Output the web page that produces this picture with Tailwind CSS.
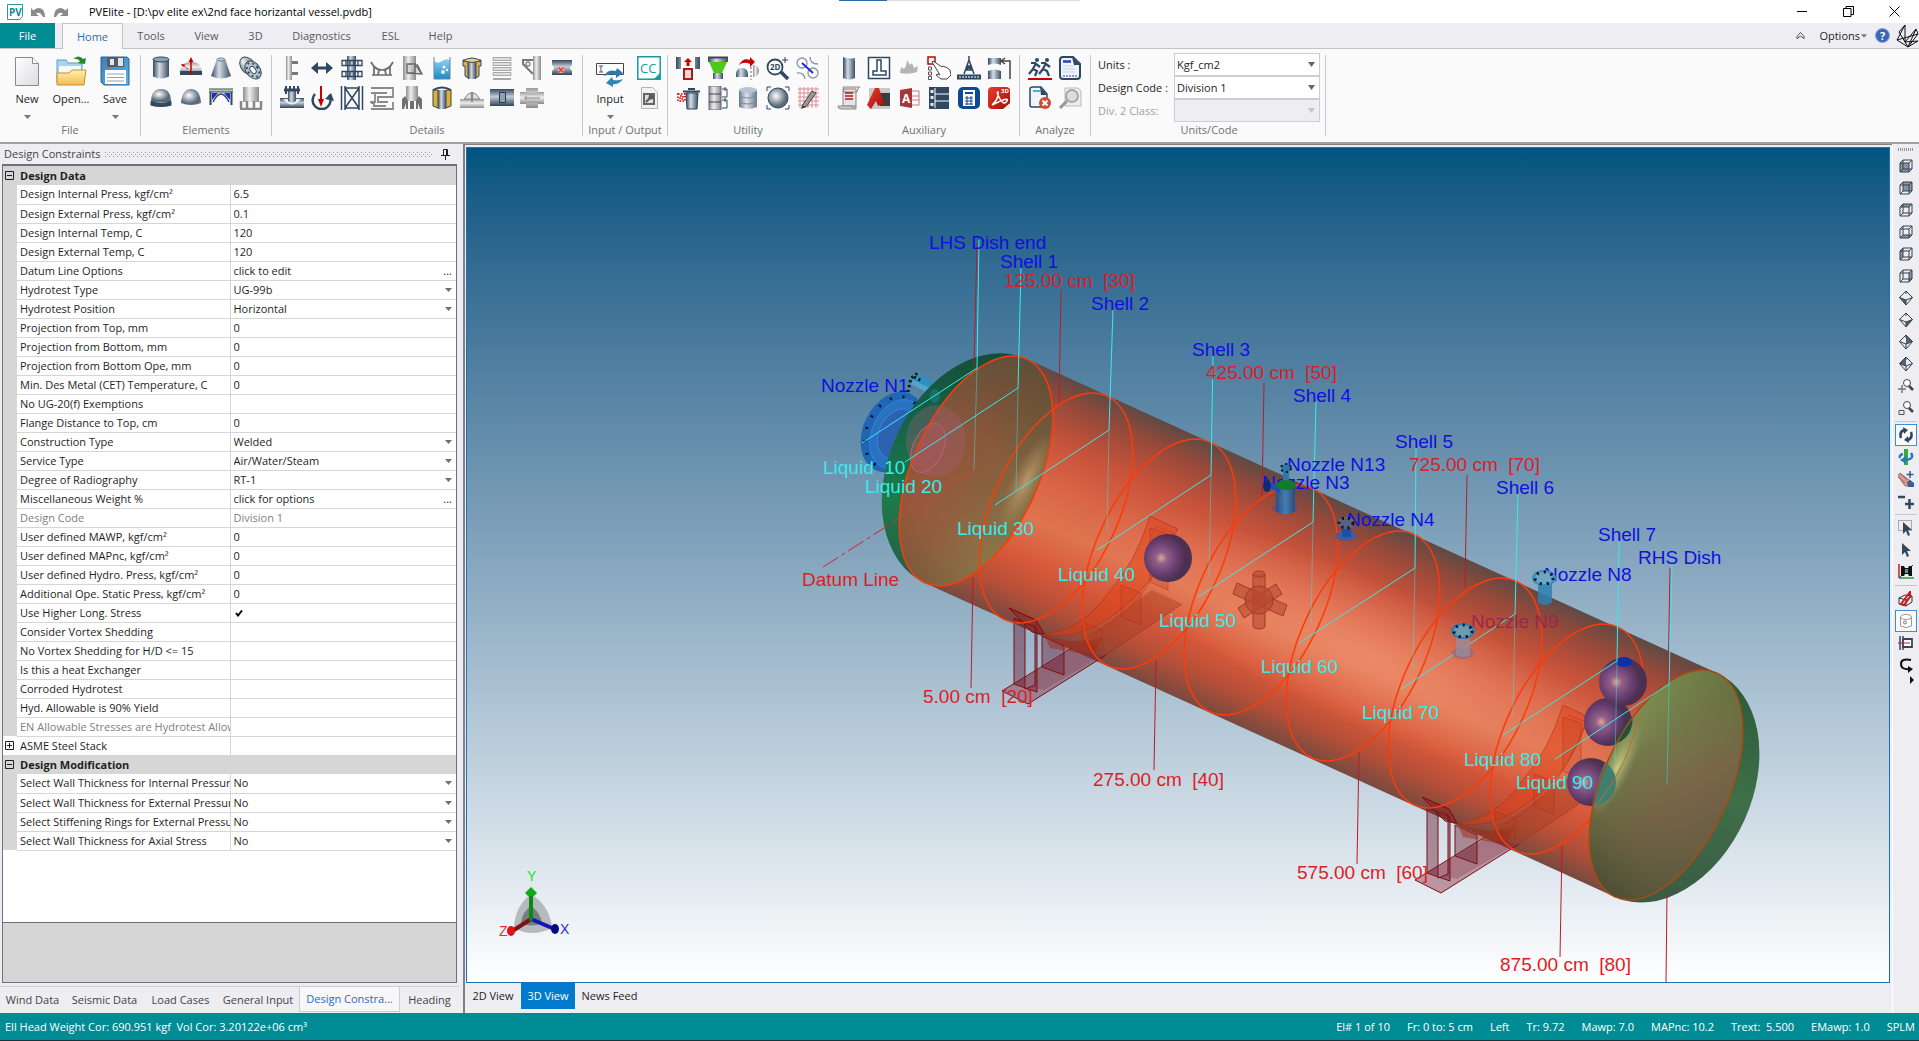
<!DOCTYPE html>
<html lang="en">
<head>
  <meta charset="UTF-8" />
  <title>PVElite</title>
  <script src="https://cdn.jsdelivr.net/npm/@tailwindcss/browser@4"></script>
</head>
<body class="h-screen flex flex-col overflow-hidden bg-[#eeeef2] font-['Open_Sans',sans-serif] text-[11px] leading-4 text-[#1e1e1e]">

  <!-- shared gradients -->
  <svg class="absolute size-0" aria-hidden="true">
    <defs>
      <linearGradient id="steel"><stop offset="0" stop-color="#34485c" /><stop offset=".4" stop-color="#d5dde5" /><stop offset="1" stop-color="#3a4e62" /></linearGradient>
      <linearGradient id="steelV" x2="0" y2="1"><stop offset="0" stop-color="#34485c" /><stop offset=".45" stop-color="#c3cdd6" /><stop offset="1" stop-color="#2f4358" /></linearGradient>
      <linearGradient id="gray"><stop offset="0" stop-color="#8f8f8f" /><stop offset=".4" stop-color="#eeeeee" /><stop offset="1" stop-color="#8a8a8a" /></linearGradient>
      <linearGradient id="grayV" x2="0" y2="1"><stop offset="0" stop-color="#999" /><stop offset=".45" stop-color="#eee" /><stop offset="1" stop-color="#8a8a8a" /></linearGradient>
      <radialGradient id="ball" cx=".4" cy=".4"><stop offset="0" stop-color="#fff" /><stop offset="1" stop-color="#5a6b7c" /></radialGradient>
      <linearGradient id="folder" x2="0" y2="1"><stop offset="0" stop-color="#fff0b0" /><stop offset="1" stop-color="#f0bd50" /></linearGradient>
      <linearGradient id="disk" x2="1" y2="1"><stop offset="0" stop-color="#3d7fb8" /><stop offset="1" stop-color="#55b4f5" /></linearGradient>
      <linearGradient id="page" x2="1" y2="1"><stop offset="0" stop-color="#ffffff" /><stop offset="1" stop-color="#dcdce2" /></linearGradient>
      <linearGradient id="water" x2="0" y2="1"><stop offset="0" stop-color="#8fd2f2" /><stop offset="1" stop-color="#1d88c4" /></linearGradient>
      <linearGradient id="red" x2="1" y2="1"><stop offset="0" stop-color="#e8402c" /><stop offset="1" stop-color="#a30d08" /></linearGradient>
    </defs>
  </svg>

  <!-- title bar -->
  <header class="relative flex h-[23px] shrink-0 items-center bg-white pl-[7px]">
    <div class="absolute top-0 left-[839px] flex h-px w-[241px] bg-[#dcdcdc]"><span class="h-px w-12 bg-[#2a6aa5]"></span></div>
    <svg class="size-4" viewBox="0 0 16 16"><path d="M.5.5h15v12l-3 3H.5z" fill="#fff" stroke="#2a9aa0" /><text x="2" y="12" font-size="10" font-weight="700" fill="#17878e" font-family="Open Sans">PV</text></svg>
    <button class="ml-[7px] text-[#8a8a8a]" aria-label="Undo"><svg class="h-4 w-4" viewBox="0 0 16 16"><path d="M1 4v8h8L6 9.500Q10 7 13 13h2Q15 4 8 4Q5 4.500 3.500 6.500z" fill="currentColor" /></svg></button>
    <button class="ml-[7px] text-[#8a8a8a]" aria-label="Redo"><svg class="h-4 w-4" viewBox="0 0 16 16"><path d="M15 4v8H7l3-2.500Q6 7 3 13H1Q1 4 8 4Q11 4.500 12.500 6.500z" fill="currentColor" /></svg></button>
    <h1 class="ml-5 text-[11px] text-black">PVElite - [D:\pv elite ex\2nd face horizantal vessel.pvdb]</h1>
    <div class="ml-auto flex items-center gap-[35px] pr-[19px]">
      <button aria-label="Minimize"><svg class="size-[11px]" viewBox="0 0 11 11"><path d="M0 5.500h10" stroke="#000" /></svg></button>
      <button aria-label="Restore"><svg class="size-[11px]" viewBox="0 0 11 11" fill="none" stroke="#000"><path d="M.5 2.500h7.500v8H.5zM3 2.500v-2h7.500v8H8" /></svg></button>
      <button aria-label="Close"><svg class="size-[11px]" viewBox="0 0 11 11"><path d="M.5.5l10 10M10.500.5l-10 10" stroke="#000" /></svg></button>
    </div>
  </header>

  <!-- ribbon tabs -->
  <nav class="flex h-[26px] shrink-0 items-stretch border-b border-[#c4c4c8] bg-[#eeeef2] text-[#5a5a5e]">
    <a href="#" class="flex w-[55px] items-center justify-center bg-[#008c95] text-white">File</a>
    <a href="#" class="-mb-px ml-[7px] flex w-[61px] items-center justify-center border border-b-0 border-[#c4c4c8] bg-[#fafafa] text-[#1c70b8]">Home</a>
    <a href="#" class="flex w-14 items-center justify-center">Tools</a>
    <a href="#" class="flex w-[55px] items-center justify-center">View</a>
    <a href="#" class="flex w-[43px] items-center justify-center">3D</a>
    <a href="#" class="flex w-[89px] items-center justify-center">Diagnostics</a>
    <a href="#" class="flex w-[49px] items-center justify-center">ESL</a>
    <a href="#" class="flex w-[51px] items-center justify-center">Help</a>
    <div class="ml-auto flex items-center text-[#1e1e1e]">
      <button aria-label="Collapse ribbon"><svg class="size-[9px]" viewBox="0 0 9 9"><path d="M1 5.500L4.500 1.500L8 5.500V7.500L4.500 5L1 7.500z" fill="#fff" stroke="#333" stroke-width=".9" /></svg></button>
      <button class="ml-3.5 flex items-center gap-px">Options<svg class="h-1 w-[6px]" viewBox="0 0 7 4"><path d="M0 0h7L3.500 4z" fill="#777" /></svg></button>
      <button class="ml-2" aria-label="Help"><svg class="size-[15px]" viewBox="0 0 15 15"><circle cx="7.500" cy="7.500" r="7" fill="#3a66b8" stroke="#8aa5d8" /><text x="5" y="12" font-size="11" font-weight="700" fill="#fff" font-family="Open Sans">?</text></svg></button>
      <svg class="ml-1.5 h-6 w-[23px]" viewBox="0 0 23 24" fill="none" stroke="#111"><path d="M9 1L1 16L12 23L22 10L20 5L9 18L9 1L3 8L12 23L20 5M1 16L22 10M9 18L22 17L12 23" /></svg>
    </div>
  </nav>

  <!-- ribbon -->
  <section class="flex h-[95px] shrink-0 items-stretch border-b-2 border-[#a0a0a0] bg-[#fafafa] pt-1.5 pb-1.5">
    <div class="flex w-[141px] flex-col border-r border-[#c8c8cc]">
      <div class="flex flex-1 justify-center gap-2 pl-0.5">
        <button class="flex w-9 flex-col items-center"><svg class="h-8 w-7" viewBox="0 0 28 32"><path d="M2.500 2.500h17l6 6v22h-23z" fill="url(#page)" stroke="#8a8a8a" /><path d="M19.500 2.500v6h6" fill="#fff" stroke="#8a8a8a" /></svg><span class="mt-1">New</span><svg class="mt-2 h-1 w-[7px]" viewBox="0 0 7 4"><path d="M0 0h7L3.500 4z" fill="#777" /></svg></button>
        <button class="flex w-9 flex-col items-center"><svg class="h-8 w-8" viewBox="0 0 32 32"><path d="M2 5h9l2 3h14v20H2z" fill="#a8d4ee" stroke="#5f9cc4" /><path d="M4 11h22v10H4z" fill="#f4f8fb" /><path d="M2 18h12l3-3h14l-2 15H2z" fill="url(#folder)" stroke="#c98f2c" /><path d="M18 4q6-5 10 0l3-1-1 6-7-1 2-2q-3-3-7-2z" fill="#1e8a2a" /></svg><span class="mt-1">Open...</span></button>
        <button class="flex w-9 flex-col items-center"><svg class="h-8 w-8" viewBox="0 0 32 32"><path d="M3 2h25l2 2v26H5l-3-3V2z" fill="url(#disk)" stroke="#2c6496" /><path d="M8 2h17v10H8z" fill="#555b62" /><path d="M11 4h4v6h-4zM19 3h5v8h-5z" fill="#e2e4e6" /><path d="M6 15h21v14H6z" fill="#fff" /><path d="M8 19h17M8 22.500h17M8 26h17" stroke="#9a9fa4" /></svg><span class="mt-1">Save</span><svg class="mt-2 h-1 w-[7px]" viewBox="0 0 7 4"><path d="M0 0h7L3.500 4z" fill="#777" /></svg></button>
      </div>
      <div class="text-center leading-3 text-[#707074]">File</div>
    </div>

    <div class="flex flex-col border-r border-[#c8c8cc] px-[5px]"><div id="elements" class="flex flex-1 flex-col gap-1"></div><div class="text-center leading-3 text-[#707074]">Elements</div></div>
    <div class="flex flex-col border-r border-[#c8c8cc] px-[5px]"><div id="details" class="flex flex-1 flex-col gap-1"></div><div class="text-center leading-3 text-[#707074]">Details</div></div>

    <div class="flex w-[85px] flex-col border-r border-[#c8c8cc]">
      <div class="flex flex-1 justify-center gap-1 pl-1">
        <button class="flex w-10 flex-col items-center"><svg class="h-8 w-8" viewBox="0 0 32 32"><path d="M2.500 8.500h27v11h-27z" fill="#fff" stroke="#444" /><path d="M5 11h4M5 17h4M7 11v6" stroke="#555" /><path d="M10 21q4-7 12-5l1-3 6 5-7 5 0-3q-5-2-12 1z" fill="#2a7bab" /><path d="M29 24q-4 6-10 5v3l-7-4 6-6 1 3q5 1 10-1z" fill="#2f86b8" /></svg><span class="mt-1">Input</span><svg class="mt-2 h-1 w-[7px]" viewBox="0 0 7 4"><path d="M0 0h7L3.500 4z" fill="#777" /></svg></button>
        <div id="io" class="flex flex-col gap-1"></div>
      </div>
      <div class="text-center leading-3 text-[#707074]">Input / Output</div>
    </div>

    <div class="flex flex-col border-r border-[#c8c8cc] px-[5px]"><div id="utility" class="flex flex-1 flex-col gap-1"></div><div class="text-center leading-3 text-[#707074]">Utility</div></div>
    <div class="flex flex-col border-r border-[#c8c8cc] px-[5px]"><div id="auxiliary" class="flex flex-1 flex-col gap-1"></div><div class="text-center leading-3 text-[#707074]">Auxiliary</div></div>
    <div class="flex flex-col border-r border-[#c8c8cc] px-[5px]"><div id="analyze" class="flex flex-1 flex-col gap-1"></div><div class="text-center leading-3 text-[#707074]">Analyze</div></div>

    <div class="flex w-[235px] flex-col border-r border-[#c8c8cc] pr-[5px] pl-[7px]">
      <div class="-mt-0.5 grid flex-1 grid-cols-[76px_1fr] content-start items-center">
        <label for="units">Units :</label>
        <div class="flex h-[23px] items-center border border-[#ccced6] bg-white pr-1"><select id="units" class="flex-1 appearance-none pl-0.5 outline-none"><option>Kgf_cm2</option></select><svg class="h-[5px] w-[7px]" viewBox="0 0 7 5"><path d="M0 0h7L3.500 5z" fill="#666" /></svg></div>
        <label for="code">Design Code :</label>
        <div class="flex h-[23px] items-center border border-[#ccced6] bg-white pr-1"><select id="code" class="flex-1 appearance-none pl-0.5 outline-none"><option>Division 1</option></select><svg class="h-[5px] w-[7px]" viewBox="0 0 7 5"><path d="M0 0h7L3.500 5z" fill="#666" /></svg></div>
        <label for="class2" class="text-[#a0a0a4]">Div. 2 Class:</label>
        <div class="flex h-[23px] items-center border border-[#ccced6] bg-[#eeeef2] pr-1"><select id="class2" disabled class="flex-1 appearance-none pl-0.5 outline-none"><option></option></select><svg class="h-[5px] w-[7px]" viewBox="0 0 7 5"><path d="M0 0h7L3.500 5z" fill="#c4c4cc" /></svg></div>
      </div>
      <div class="text-center leading-3 text-[#707074]">Units/Code</div>
    </div>
  </section>

  <main class="flex min-h-0 flex-1">
    <!-- property panel -->
    <aside class="flex w-[459px] shrink-0 flex-col">
      <div class="flex h-5 shrink-0 items-center gap-1 pr-[9px] pl-1 text-[#444]">
        <h2>Design Constraints</h2>
        <svg class="h-[5px] flex-1"><defs><pattern id="dots" width="4" height="4" patternUnits="userSpaceOnUse"><path d="M0 0h1v1H0zM2 2h1v1H2z" fill="#999" /></pattern></defs><rect width="100%" height="5" fill="url(#dots)" /></svg>
        <button class="ml-1" aria-label="Auto hide"><svg class="h-[11px] w-[9px]" viewBox="0 0 9 11"><path d="M2.500 6V.5h4V6M5.500 1v5M0 6.500h9M4.500 7v4" fill="none" stroke="#1e1e1e" /></svg></button>
      </div>
      <div class="mx-0.5 flex min-h-0 flex-1 flex-col border border-t-2 border-[#70707a] bg-white">
        <table class="w-full table-fixed border-collapse">
          <colgroup><col class="w-[14px]" /><col class="w-[213px]" /><col /></colgroup>
          <tbody id="props"></tbody>
        </table>
        <div class="flex-1 bg-white"></div>
        <div class="h-[60px] shrink-0 border-t border-[#70707a] bg-[#d6d6d6]"></div>
      </div>
      <div class="mt-[3px] mb-px flex h-[26px] shrink-0 items-stretch border-t border-[#ccced6] text-[#444]">
        <a href="#" class="flex w-[65px] items-center justify-center">Wind Data</a>
        <a href="#" class="flex w-[79px] items-center justify-center">Seismic Data</a>
        <a href="#" class="flex w-[73px] items-center justify-center">Load Cases</a>
        <a href="#" class="flex w-[82px] items-center justify-center">General Input</a>
        <a href="#" class="flex w-[101px] items-center justify-center border-x border-b border-[#ccced6] bg-[#f7f7f9] text-[#1c70b8]">Design Constra...</a>
        <a href="#" class="flex w-[59px] items-center justify-center">Heading</a>
      </div>
    </aside>

    <!-- vessel view -->
    <section class="ml-1 flex min-w-0 flex-1 flex-col border-t border-l-2 border-[#808086]">
      <div class="mt-0.5 mr-[2px] ml-px min-h-0 flex-1 border border-[#1c70b8] bg-linear-to-b from-[#00547f] to-white">
        <svg class="block h-full w-full" viewBox="467 148 1422 834" font-family="Liberation Sans, Arial, sans-serif" font-size="19">
          <defs>
            <linearGradient id="shell" gradientUnits="userSpaceOnUse" x1="1027" y1="359" x2="925" y2="583">
              <stop offset="0" stop-color="#5f4a45" /><stop offset=".1" stop-color="#96493a" /><stop offset=".25" stop-color="#c7523a" /><stop offset=".42" stop-color="#d96546" /><stop offset=".58" stop-color="#df7450" /><stop offset=".75" stop-color="#d7583a" /><stop offset=".88" stop-color="#b54f38" /><stop offset="1" stop-color="#774a40" />
            </linearGradient>
            <radialGradient id="glow"><stop offset="0" stop-color="#f59a78" stop-opacity=".6" /><stop offset="1" stop-color="#f59a78" stop-opacity="0" /></radialGradient>
            <linearGradient id="headL" gradientUnits="userSpaceOnUse" x1="1010" y1="350" x2="930" y2="590"><stop offset="0" stop-color="#164a35" /><stop offset=".4" stop-color="#15634a" /><stop offset=".7" stop-color="#1f7a48" /><stop offset="1" stop-color="#205f45" /></linearGradient>
            <linearGradient id="discL" gradientUnits="userSpaceOnUse" x1="905" y1="440" x2="1045" y2="500"><stop offset="0" stop-color="#86563e" /><stop offset=".35" stop-color="#96573a" /><stop offset=".65" stop-color="#8d6340" /><stop offset="1" stop-color="#84794a" /></linearGradient>
            <linearGradient id="shadeL" gradientUnits="userSpaceOnUse" x1="1020" y1="356" x2="935" y2="586"><stop offset="0" stop-color="#3a4a34" stop-opacity=".6" /><stop offset=".4" stop-color="#3a4a34" stop-opacity=".1" /><stop offset=".7" stop-color="#b0583a" stop-opacity=".1" /><stop offset="1" stop-color="#6a4a38" stop-opacity=".5" /></linearGradient>
            <radialGradient id="sheen"><stop offset="0" stop-color="#cfa877" stop-opacity=".75" /><stop offset="1" stop-color="#b0895a" stop-opacity="0" /></radialGradient>
            <linearGradient id="discR" gradientUnits="userSpaceOnUse" x1="1600" y1="750" x2="1735" y2="820"><stop offset="0" stop-color="#7f9152" /><stop offset=".25" stop-color="#75784b" /><stop offset=".6" stop-color="#7b6348" /><stop offset="1" stop-color="#6a5a44" /></linearGradient>
            <linearGradient id="shadeR" gradientUnits="userSpaceOnUse" x1="1710" y1="675" x2="1630" y2="900"><stop offset="0" stop-color="#5f6f3c" stop-opacity=".6" /><stop offset=".4" stop-color="#707545" stop-opacity=".1" /><stop offset=".75" stop-color="#4f5d35" stop-opacity=".3" /><stop offset="1" stop-color="#3f4a30" stop-opacity=".8" /></linearGradient>
            <radialGradient id="sheenR"><stop offset="0" stop-color="#cfd98c" stop-opacity=".85" /><stop offset="1" stop-color="#a8b070" stop-opacity="0" /></radialGradient>
            <linearGradient id="headR" gradientUnits="userSpaceOnUse" x1="1700" y1="670" x2="1660" y2="905"><stop offset="0" stop-color="#2a5a38" /><stop offset=".5" stop-color="#3f6f48" /><stop offset="1" stop-color="#3a5a44" /></linearGradient>
            <radialGradient id="sphere" cx=".36" cy=".5"><stop offset="0" stop-color="#dfa595" /><stop offset=".25" stop-color="#8f5f88" /><stop offset=".65" stop-color="#6b3f72" /><stop offset="1" stop-color="#4c3050" /></radialGradient>
            <linearGradient id="pipe"><stop offset="0" stop-color="#1d4f8c" /><stop offset=".5" stop-color="#3a86c4" /><stop offset="1" stop-color="#1c4a80" /></linearGradient>
          </defs>

          <!-- left flange and nozzle -->
          <g>
            <ellipse cx="893" cy="432" rx="30" ry="42" transform="rotate(24.500 893 432)" fill="#1f66b4" />
            <ellipse cx="897" cy="434" rx="25" ry="36" transform="rotate(24.500 897 434)" fill="#2a72c0" stroke="#2f83dd" />
            <ellipse cx="897" cy="434" rx="18" ry="26" transform="rotate(24.500 897 434)" fill="#2d62b0" stroke="#2f83dd" />
            <ellipse cx="893" cy="432" rx="26" ry="37" transform="rotate(24.500 893 432)" fill="none" stroke="#06122a" stroke-width="3" stroke-dasharray="2 11" />
            <path d="M908 379l9-6 34 18-8 12z" fill="#2f8fbd" /><path d="M912 382l34 17" stroke="#5cb8dc" stroke-width="5" opacity=".6" />
            <path d="M908 392l3-14 8-6M914 377l8 4" stroke="#111" stroke-width="3" stroke-dasharray="2 3" fill="none" />
          </g>

          <!-- left head -->
          <path d="M1027 359A87 123 24.500 0 0 925 583A63 123 24.500 0 1 1027 359z" fill="url(#headL)" />
          <ellipse cx="935" cy="396" rx="5" ry="7" fill="#1e7f80" opacity=".6" />

          <!-- shell body -->
          <path d="M1027 359L1717 673A63 123 24.500 0 1 1615 897L925 583A63 123 24.500 0 1 1027 359z" fill="url(#shell)" />
          <ellipse cx="1370" cy="655" rx="320" ry="72" transform="rotate(24.500 1370 655)" fill="url(#glow)" />

          <ellipse cx="976" cy="471" rx="63" ry="123" transform="rotate(24.500 976 471)" fill="url(#discL)" />
          <ellipse cx="976" cy="471" rx="63" ry="123" transform="rotate(24.500 976 471)" fill="url(#shadeL)" />
          <ellipse cx="1026" cy="482" rx="15" ry="56" transform="rotate(26 1026 482)" fill="url(#sheen)" />
          <ellipse cx="936" cy="441" rx="30" ry="36" fill="#a4607a" opacity=".32" />
          <ellipse cx="928" cy="448" rx="15" ry="26" transform="rotate(24.500 928 448)" fill="#a85860" fill-opacity=".4" stroke="#b06478" />

          <!-- saddles -->
          <g id="saddle">
            <path d="M1002 691L1072 648L1106 655L1028 704z" fill="#8a3040" fill-opacity=".45" />
            <path d="M1072 648L1106 655L1182 604L1152 590z" fill="#a03c20" fill-opacity=".4" />
            <path d="M1072 648L1002 691L1028 704L1106 655" fill="none" stroke="#7a0c14" />
            <path d="M1106 655L1182 604" stroke="#a02c18" stroke-opacity=".7" stroke-dasharray="3 1" />
            <path d="M1014 618l23 10v64l-23-8zM1025 623v66l10-4v-60M1042 636l22 10v29l-22-8z" fill="#6a1f30" fill-opacity=".45" stroke="#7a0c14" />
            <path d="M1014 684l58-34 30 6-58 34z" fill="#7a2030" fill-opacity=".25" />
            <path d="M1009 608l27 12 8 14q42 10 92-38 22-22 34-54l8-13-28-13q-14 46-41 76-26 38-66 42l-8-14z" fill="#e03c12" fill-opacity=".45" stroke="#b02c12" stroke-opacity=".6" />
            <path d="M1155 526l18 7q-16 46-44 76-28 26-52 30" fill="none" stroke="#b02c12" stroke-opacity=".4" />
            <path d="M1009 608l27 12 8 14-12-2z" fill="#8a1c20" fill-opacity=".5" stroke="#7a0c14" />
            <path d="M1044 634q28 12 58 4l-8 18-44-8z" fill="#a02818" fill-opacity=".5" />
            <path d="M1121 585l20 8v32l-20-8zM1082 622l20 8v20l-20-10zM1150 528l18 6v56l-18-8z" fill="#c03a1a" fill-opacity=".25" stroke="#a02818" stroke-opacity=".4" />
          </g>
          <use href="#saddle" x="413" y="189" />

          <!-- weld seams -->
          <g id="seams" fill="none" stroke="#fa3c0a" stroke-width="1.500"></g>

          <!-- internals hub -->
          <g fill="#b84a32" fill-opacity=".6" stroke="#a03c28">
            <path d="M1253 574v52a6 3 0 0 0 12 0v-52" /><ellipse cx="1259" cy="574" rx="6" ry="3" />
            <path d="M1237 583l50 22-4 11-50-22z" /><path d="M1238 608l38-24 6 10-38 24z" />
            <circle cx="1259" cy="600" r="14" />
          </g>

          <!-- weights -->
          <g fill="url(#sphere)">
            <circle cx="1168" cy="558" r="24" /><circle cx="1608" cy="722" r="24" /><circle cx="1623" cy="682" r="24" /><circle cx="1591" cy="782" r="24" />
          </g>
          <ellipse cx="1624" cy="662" rx="8" ry="5" fill="#0d2fa8" />

          <!-- right head -->
          <path d="M1717 673A86 123 24.500 0 1 1615 897A63 123 24.500 0 0 1717 673z" fill="url(#headR)" />
          <ellipse cx="1666" cy="785" rx="63" ry="123" transform="rotate(24.500 1666 785)" fill="url(#discR)" />
          <ellipse cx="1666" cy="785" rx="63" ry="123" transform="rotate(24.500 1666 785)" fill="url(#shadeR)" />
          <ellipse cx="1617" cy="768" rx="14" ry="52" transform="rotate(26 1617 768)" fill="url(#sheenR)" />
          <path d="M1632 716A24 24 0 0 1 1614 744Q1620 730 1632 716z" fill="#1f5040" />
          <path d="M1605 762A24 24 0 0 1 1594 806Q1596 782 1605 762z" fill="#3f7f70" />
          <path d="M1638 712Q1632 762 1594 808" fill="none" stroke="#c06a30" />
          <ellipse cx="1666" cy="785" rx="63" ry="123" transform="rotate(24.500 1666 785)" fill="none" stroke="#a84a14" stroke-width="1.500" />

          <!-- dimension and leader lines -->
          <g id="dims" stroke="#b81c28"></g>
          <g id="leaders" fill="none" stroke="#35ecec"></g>
          <path d="M823 567L892 523" stroke="#d81e28" stroke-dasharray="18 4 4 4" /><path d="M892 523L974 470" stroke="#c84a30" opacity=".7" />

          <g id="labels"></g>

          <!-- top nozzles -->
          <g>
            <ellipse cx="1285" cy="508" rx="13" ry="6" fill="#5a4a80" fill-opacity=".6" />
            <path d="M1276 486h19v24a9 4 0 0 1-19 0z" fill="url(#pipe)" fill-opacity=".85" />
            <path d="M1283 469h6v14h-6z" fill="#2a78b0" />
            <path d="M1266 486l14 7v-7l-12-4z" fill="#1a50b8" /><ellipse cx="1267" cy="486" rx="4" ry="6" fill="#0d2a78" />
            <ellipse cx="1286" cy="485" rx="10" ry="5" fill="#147a28" />
            <ellipse cx="1286" cy="468" rx="5" ry="4" fill="#2a78b0" stroke="#111" stroke-width="2" stroke-dasharray="2 3" />
            <ellipse cx="1346" cy="536" rx="11" ry="5" fill="#4a5a98" />
            <path d="M1342 526h9v11h-9z" fill="#1d4fa8" />
            <ellipse cx="1346" cy="523" rx="9" ry="6" fill="#5a6280" /><ellipse cx="1346" cy="523" rx="7" ry="5" fill="none" stroke="#111" stroke-width="3" stroke-dasharray="2 4" />
            <path d="M1538 580h14v22a7 3 0 0 1-14 0z" fill="#2f7fb0" fill-opacity=".85" />
            <ellipse cx="1544" cy="578" rx="12" ry="8" fill="#3a8fc4" /><ellipse cx="1544" cy="578" rx="9" ry="6" fill="#6ea6c4" stroke="#111" stroke-width="3" stroke-dasharray="2 5" />
            <ellipse cx="1463" cy="653" rx="11" ry="6" fill="#8a6a80" fill-opacity=".7" />
            <path d="M1456 634h14v20a7 3 0 0 1-14 0z" fill="#9a8a9c" fill-opacity=".8" />
            <ellipse cx="1463" cy="631" rx="12" ry="8" fill="#2f7fae" /><ellipse cx="1463" cy="631" rx="9" ry="6" fill="#6a9ab4" stroke="#111" stroke-width="3" stroke-dasharray="2 5" />
          </g>

          <!-- axis triad -->
          <g stroke-linecap="round">
            <path d="M531 894Q550 906 552 928Q532 938 514 928Q515 906 531 894z" fill="#b4babd" />
            <path d="M531 906Q540 912 542 923Q531 928 521 923Q522 912 531 906z" fill="#777c7f" />
            <path d="M531 919L514 930" stroke="#7a1414" stroke-width="4" /><path d="M531 919L552 928" stroke="#1414b8" stroke-width="4" />
            <path d="M531 919V894" stroke="#0a8a14" stroke-width="4" /><path d="M531 887l6 6-3 3h-6l-3-3z" fill="#12a81c" />
            <ellipse cx="511" cy="931" rx="4" ry="5" fill="#e01414" /><ellipse cx="555" cy="929" rx="4" ry="5" fill="#0a0a80" />
            <g font-size="14"><text x="527" y="881" fill="#1fe01f">Y</text><text x="499" y="936" fill="#e83030">Z</text><text x="560" y="934" fill="#2a2ae0">X</text></g>
          </g>
        </svg>
      </div>
      <div class="flex h-[30px] shrink-0 items-start">
        <a href="#" class="flex h-[26px] w-14 items-center justify-center">2D View</a>
        <a href="#" class="flex h-[26px] w-[54px] items-center justify-center bg-[#007acc] text-white">3D View</a>
        <a href="#" class="flex h-[26px] w-[69px] items-center justify-center">News Feed</a>
      </div>
    </section>

    <!-- view toolbar -->
    <div id="viewbar" class="flex w-[27px] shrink-0 flex-col items-center border-l border-white pt-1"></div>
  </main>

  <footer class="flex h-7 shrink-0 items-center border-b border-[#1c3038] bg-[#008c95] pr-1 pl-[5px] text-white">
    <span>Ell Head Weight Cor: 690.951 kgf &nbsp;Vol Cor: 3.20122e+06 cm³</span>
    <div class="ml-auto flex gap-[17px]">
      <span>El# 1 of 10</span><span>Fr: 0 to: 5 cm</span><span>Left</span><span>Tr: 9.72</span><span>Mawp: 7.0</span><span>MAPnc: 10.2</span><span>Trext: &nbsp;5.500</span><span>EMawp: 1.0</span><span>SPLM</span>
    </div>
  </footer>

  <script>
    // ribbon icons, two rows per group, drawn on a 24x24 grid
    const N = '#2f4760';
    const icons = {
      elements: [[
        ['Cylinder', `<path d="M4 3.500v17q8 4 16 0v-17z" fill="url(#steel)"/><ellipse cx="12" cy="3.500" rx="8" ry="2.500" fill="#8fa0b0" stroke="${N}"/>`],
        ['Elliptical head', `<path d="M1 17q0-11 11-11t11 11z" fill="url(#grayV)"/><path d="M1 15h22v4H1z" fill="#34485c"/><path d="M12 19V6" stroke="#c80000" stroke-width="1.500"/><path d="M12 1L9.500 6h5zM2 8l4.500.5L4 11z" fill="#c80000"/><path d="M9 13L4 9" stroke="#c80000" stroke-dasharray="2 1"/>`],
        ['Cone', `<path d="M8 3h8l6 17q-10 5-20 0z" fill="url(#steel)"/><ellipse cx="12" cy="3.500" rx="4" ry="1.500" fill="#c5ced6" stroke="${N}" stroke-width=".6"/>`],
        ['Flange', `<ellipse cx="9" cy="10" rx="7" ry="10" transform="rotate(-38 9 10)" fill="url(#gray)" stroke="${N}"/><ellipse cx="14" cy="14" rx="7" ry="10" transform="rotate(-38 14 14)" fill="#b8c2cb" stroke="${N}"/><ellipse cx="14" cy="14" rx="5" ry="8" transform="rotate(-38 14 14)" fill="none" stroke="${N}" stroke-dasharray="2 3" stroke-width="2"/><ellipse cx="14" cy="14" rx="2.500" ry="4" transform="rotate(-38 14 14)" fill="#fff" stroke="${N}"/>`],
      ], [
        ['Torispherical head', `<path d="M2 16q0-13 10-13t10 13z" fill="url(#ball)"/><path d="M1.500 15q10.500 3 21 0v4.500q-10.500 3-21 0z" fill="#34485c"/>`],
        ['Spherical head', `<path d="M2 17q1-14 10-14t10 14q-10 4-20 0z" fill="url(#ball)"/>`],
        ['Skirt', `<path d="M0 2.500h24v4H0z" fill="url(#steelV)"/><path d="M1.500 6v13M22.500 6v13" stroke="${N}" stroke-width="2"/><path d="M3 7h6l-6 7zM21 7h-6l6 7z" fill="#1a2ad0"/><path d="M4 16Q12 0 20 16" fill="none" stroke="${N}" stroke-width="1.500"/>`],
        ['Lug', `<path d="M4 1h16v15H4z" fill="url(#gray)"/><path d="M2 15v7M8 15v7M15 15v7M22 15v7M1 23h22" stroke="#888" stroke-width="2.500"/>`],
      ]],
      details: [[
        ['Ring', `<path d="M6 0h6v24H6z" fill="url(#gray)"/><path d="M12 6.500h6M12 17.500h6" stroke="#777" stroke-width="3"/>`],
        ['Nozzle', `<path d="M3 12h18" stroke="${N}" stroke-width="3"/><path d="M1 12l7-6v12zM23 12l-7-6v12z" fill="${N}"/>`],
        ['Tray', `<path d="M7 0h9v24H7z" fill="url(#steel)"/><path d="M2 4.500h20v5H2zM2 15.500h20v5H2zM6 4v6M10 4v6M14 4v6M18 4v6M6 15v6M10 15v6M14 15v6M18 15v6" fill="none" stroke="${N}" stroke-width="1.300"/>`],
        ['Saddle', `<path d="M1 6q4 8 11 8t11-8M2 19h20M4 11v8M20 11v8M9 14l-1 5M15 14l1 5" fill="none" stroke="#6b6b6b" stroke-width="1.700"/>`],
        ['Lug detail', `<path d="M3 0h13v24H3z" fill="url(#gray)"/><path d="M7 8h8v9H7zM15 8l6 9M7 17l15 1-5-10" fill="#c8c8c8" fill-opacity=".6" stroke="#666" stroke-width="1.300"/>`],
        ['Liquid', `<path d="M4 5q4 3 8 0t8-1v19H4z" fill="url(#water)"/><path d="M4 1v22h16V1" fill="none" stroke="#5a8aa5"/><circle cx="14" cy="11" r="1.500" fill="#fff"/><circle cx="17" cy="14" r="1.200" fill="#fff"/><circle cx="13" cy="16" r="2" fill="#d9f1fc"/>`],
        ['Insulation', `<path d="M3 4h5v18l-3-2V10H3zM16 4h5v6h-2v10l-3 2z" fill="#e0b050" stroke="${N}"/><path d="M8 4h8v19H8z" fill="url(#steel)"/><path d="M3 5q9-6 18 0-9 3-18 0z" fill="#f0cf80" stroke="${N}"/>`],
        ['Packing', `<path d="M3 3h18M3 8h18M3 13h18M3 18h18M3 23h18" stroke="#8c8c8c" stroke-width="1.500"/><path d="M3 1.500h18v3H3zM3 6.500h18v3H3zM3 11.500h18v3H3zM3 16.500h18v3H3z" fill="#ddd" stroke="#999" stroke-width=".8"/>`],
        ['Clip', `<path d="M13 0h8v24h-8z" fill="url(#gray)"/><path d="M13 4H3v4l10 10" fill="none" stroke="#777" stroke-width="2"/><circle cx="8" cy="8" r="2" fill="none" stroke="#888" stroke-width="1.300"/>`],
        ['Half-pipe', `<path d="M2 4h20v5l-2 2v2l2 2v4H2v-4l2-2v-2L2 9z" fill="url(#steelV)"/><path d="M8 11h6v6H8z" fill="#f4b0a8"/><path d="M8.500 11.500l5 5M13.500 11.500l-5 5" stroke="#e04030" stroke-width="1.500"/>`],
      ], [
        ['Nozzle', `<path d="M0 12h24v10H0z" fill="url(#steelV)"/><path d="M3 13q9 11 18 0" fill="#e7ecf0"/><path d="M8 5h8v10q-4 3-8 0z" fill="url(#steel)"/><path d="M4 2.500h16v3H4z" fill="#34485c"/><path d="M6 0v8M10 0v4M14 0v4M18 0v8" stroke="${N}" stroke-width="2"/>`],
        ['Moment', `<path d="M5 8A9 9 0 1 0 19 9" fill="none" stroke="${N}" stroke-width="2.500"/><path d="M15 13l6-6 3 8z" fill="${N}"/><path d="M11 0v14" stroke="#c80000" stroke-width="2"/><path d="M11 21l-3-8h6z" fill="#c80000"/>`],
        ['Bracing', `<path d="M1.500 0v24M22.500 0v24M5 0v24M19 0v24M5 2h14M5 22h14M5 2l14 20M19 2L5 22" stroke="${N}" stroke-width="1.500" fill="none"/>`],
        ['Jacket', `<path d="M1 2h22v9H8v5h10M1 23h22v-7M1 7h16M1 17v-1h4V7M1 17h3v3h12" fill="none" stroke="#8a8a8a" stroke-width="1.800"/>`],
        ['Legs', `<path d="M6 0h12v15H6z" fill="url(#gray)"/><path d="M2 23V13l3-3 3 5v8H6v-6l-2 6zM16 23v-8l3-5 3 3v10h-2l-2-6v6zM10 15h4v8h-4z" fill="#707070"/>`],
        ['Lining', `<path d="M3 4h5v18l-5-2zM16 4h5v16l-5 2z" fill="#e0b030" stroke="${N}"/><path d="M8 4h8v19H8z" fill="url(#steel)"/><path d="M3 4q9-5 18 0" fill="none" stroke="${N}" stroke-width="2"/>`],
        ['Base ring', `<path d="M0 13h24v9H0z" fill="url(#grayV)"/><path d="M4 13q8-13 16 0z" fill="#ddd" stroke="#888"/><path d="M12 6v10" stroke="#888" stroke-width="2"/>`],
        ['Plate', `<path d="M0 3h24v17H0z" fill="url(#steelV)"/><path d="M9.500 6.500h6v10h-6z" fill="#8fa2b4" stroke="#22384e"/>`],
        ['Coupling', `<path d="M0 6h24v12H0z" fill="url(#grayV)"/><path d="M6 2h12v5H6zM6 17h12v5H6z" fill="url(#grayV)"/><path d="M4 12h16M6 10v4" stroke="#888"/>`],
      ]],
      io: [[
        ['CodeCalc', `<path d="M.8.800h22.400v22.400H.8z" fill="#fff" stroke="#1a9a9c" stroke-width="1.500"/><path d="M23 17v6h-6z" fill="#1a9a9c"/><text x="3" y="17" font-size="13" font-family="Open Sans" fill="#1a9a9c">CC</text>`],
      ], [
        ['Review', `<path d="M4.500 1.500h11l5 5v16h-16z" fill="#f2f2f2" stroke="#b4b4b4"/><path d="M6 7h12v12H6z" fill="#666"/><path d="M8 9h8v8H8z" fill="#ddd"/><path d="M9 16l5-5" stroke="#555" stroke-width="2"/><circle cx="14" cy="11" r="2.500" fill="#555"/>`],
      ]],
      utility: [[
        ['Insert', `<path d="M0 1h5v12H0zM19 1h5v12h-5z" fill="url(#steel)"/><path d="M8 13h8v10H8z" fill="#fbd5d5" stroke="#b01818" stroke-width="2"/><path d="M12 2l4 4h-2.500v4h-3V6H8z" fill="#c80000"/>`],
        ['Cone', `<path d="M2 1h20v5H2z" fill="url(#steel)"/><path d="M2 1.500h20" stroke="#34485c" stroke-width="2"/><path d="M3 6h18l-5 11H8z" fill="#4cc81c"/><path d="M7 17h10v6H7z" fill="url(#steel)"/>`],
        ['Flip', `<path d="M0 19q0-7 6-7t6 7v2H0z" fill="url(#steel)"/><path d="M17 9h2q4 2 4 6t-4 6h-2z" fill="url(#gray)"/><path d="M15 7v17" stroke="#666" stroke-dasharray="2 2"/><path d="M3 9q4-8 11-5V1l5 5-5 5V8q-6-3-11 1z" fill="#c80000"/>`],
        ['Zoom 2D', `<circle cx="9" cy="11" r="7.500" fill="#fff" stroke="${N}" stroke-width="1.800"/><path d="M15 16l7 7" stroke="${N}" stroke-width="3.500"/><text x="4" y="14" font-size="8" font-weight="700" font-family="Open Sans" fill="${N}">2D</text><path d="M19 1v6M16 4h6" stroke="${N}"/>`],
        ['Link', `<g fill="none" stroke="#8796a5" stroke-width="1.300"><circle cx="6" cy="7" r="5"/><circle cx="17" cy="17" r="5"/><path d="M14 1q0 7 8 7M1 17q7-1 8 6"/></g><path d="M6 7l11 10" stroke="#2020e0" stroke-width="1.800"/>`],
      ], [
        ['Delete', `<path d="M10 7h12l-1 16H11z" fill="url(#steel)" stroke="${N}"/><path d="M7 5.500h17M12 3h7" stroke="${N}" stroke-width="2"/><path d="M2 8h7v7H2zM4 10h3v3H4z" fill="none" stroke="#d03030" stroke-width="2" stroke-dasharray="1.500 1.500"/>`],
        ['Renumber', `<path d="M3 0h12v24H3z" fill="url(#gray)" stroke="#667"/><path d="M3 8h12M3 16h12M16 3h5v8h-5M16 14h5v8h-5M19 1v4M19 12v4" fill="none" stroke="${N}"/>`],
        ['Database', `<path d="M3 4v17q9 4 18 0V4z" fill="url(#steel)" opacity=".75"/><ellipse cx="12" cy="4" rx="9" ry="3" fill="#b9c3d6"/><path d="M3 10q9 4 18 0M3 16q9 4 18 0" fill="none" stroke="#7888a0"/>`],
        ['Sphere', `<circle cx="12" cy="12" r="10" fill="url(#ball)" stroke="${N}"/><path d="M1 5V1h4M19 1h4v4M1 19v4h4M23 19v4h-4" fill="none" stroke="${N}"/>`],
        ['Grid', `<path d="M2 3h21M2 7h21M2 11h21M2 15h21M2 19h21M4 1v21M8 1v21M12 1v21M16 1v21M20 1v21" stroke="#e08a94"/><path d="M6 20L16 5l4 2L10 21z" fill="#999" stroke="#444"/><path d="M6 20l4 1-5 2z" fill="#333"/>`],
      ]],
      auxiliary: [[
        ['Pipe', `<path d="M6 1q6 3 12 1v20q-6 3-12 0z" fill="url(#steel)"/><path d="M9 2q4 2 9 0v3q-5-1-9-3z" fill="#6f8192"/>`],
        ['Section', `<path d="M1.500 1.500h21v21h-21z" fill="#fff" stroke="${N}" stroke-width="1.500"/><path d="M10 4h4v11h5v4H6v-4h4z" fill="none" stroke="${N}" stroke-width="1.500"/>`],
        ['Terrain', `<path d="M3 17l1-6 3 2 2-3 1-6 3 5 2-2 2 5 4-2-1 6q-9 3-17 1z" fill="#b4b4b4"/>`],
        ['Select', `<path d="M1 1h7v7H1z" fill="none" stroke="#c80000" stroke-width="1.500"/><path d="M1.500 11h3v3h-3zM1.500 16h3v3h-3zM1.500 20.500h3v3h-3z" fill="none" stroke="#555"/><path d="M6 5l9 6 1-1 2 1 1 0 4 3 1 5-4 4h-6l-5-4 2-1 2 1-8-13z" fill="#fff" stroke="#444"/>`],
        ['Tower', `<path d="M12 0v4M12 4L7 18M12 4l5 14M9 10h6M8 14h8M9 10l7 4M15 10l-7 4" stroke="${N}" stroke-width="1.500" fill="none"/><path d="M0 18.500h24v5H0z" fill="${N}"/><path d="M3 20v2M6 20v2M9 20v2M12 20v2M15 20v2M18 20v2M21 20v2" stroke="#fff"/>`],
        ['Split', `<path d="M1 2h13v7q-6-3-13 0zM1 15q7-3 13 0v8H1z" fill="url(#steel)"/><path d="M14 5h9v18M18 2l-4 3 4 3" fill="none" stroke="#444" stroke-width="1.500"/>`],
      ], [
        ['Script', `<path d="M6 1h17q-3 2-3 5H7zM6 3h13v17H6z" fill="#e4e4e6" stroke="#888"/><path d="M1 20h14q0 3 4 0v3H4q-3 0-3-3z" fill="#ccc" stroke="#888"/><path d="M8 7h8M8 10h8M8 13h8" stroke="#b01818" stroke-width="1.500"/>`],
        ['AutoCAD', `<path d="M2 2h21v21H2z" fill="#c9c9c9"/><path d="M13 7h10v13H13z" fill="#3c3c3c"/><path d="M0 19L8 2h4l5 16-6 2-2-5-5 8z" fill="url(#red)"/>`],
        ['Access', `<path d="M3 4l12-2v20L3 20z" fill="#a4373a"/><path d="M15 5h7v14h-7M15 10h7M15 14h7" fill="#fff" stroke="#c87478"/><text x="5" y="17" font-size="12" font-weight="700" font-family="Open Sans" fill="#fff">A</text>`],
        ['List', `<path d="M2 1h20v22H2z" fill="${N}"/><path d="M8 2v20M8 8h14M8 15h14" stroke="#fff"/><path d="M3.500 4h3v3h-3zM3.500 10h3v3h-3zM3.500 17h3v3h-3z" fill="#dfe8f0"/>`],
        ['Calculator', `<rect x="1" y="1" width="22" height="22" rx="5" fill="#0d4a92"/><path d="M6 4h12v16H6z" fill="#fff"/><path d="M8 6h8v2H8z" fill="#0d4a92"/><path d="M8 12h8M8 15h8M8 18h8M10 10v9M14 10v9" stroke="#0d4a92"/>`],
        ['3D PDF', `<rect x="1" y="1" width="22" height="22" rx="4" fill="url(#red)"/><path d="M5 19q7-6 6-13-2 0 2 7t7 2-15 4" fill="none" stroke="#fff" stroke-width="1.500"/><path d="M23 17v6h-7z" fill="#eee"/><text x="14" y="7" font-size="6" font-weight="700" font-family="Open Sans" fill="#fff">3D</text>`],
      ]],
      analyze: [[
        ['Run', `<g fill="none" stroke="${N}" stroke-width="2.200"><path d="M8 7l-3 6 4 2-2 5M5 13l-4 5M8 8l4 3M3 7l5 0M18 7l-3 6 4 2 2 5M15 13l-4 5M18 8l4 3M13 7l5 0"/></g><circle cx="9" cy="4" r="2" fill="${N}"/><circle cx="19" cy="4" r="2" fill="${N}"/><path d="M0 23h24" stroke="#c80000" stroke-width="2"/>`],
        ['Report', `<path d="M2 4q0-3 3-3h10l7 7v12q0 3-3 3H5q-3 0-3-3z" fill="#eef4fa" stroke="${N}" stroke-width="2"/><path d="M14 1l8 8h-6z" fill="${N}"/><path d="M5 5.500h8" stroke="#2040d0" stroke-width="2.500"/><path d="M5 20h14" stroke="#2040d0" stroke-dasharray="2 1"/><path d="M5 10h12M5 13h12M5 16h12" stroke="#c5d3e0"/>`],
      ], [
        ['Errors', `<path d="M2 3q0-2 3-2h8l6 7v13H4q-2 0-2-2z" fill="#eef4fa" stroke="${N}" stroke-width="1.500"/><path d="M12 1l7 8h-6z" fill="${N}"/><path d="M5 5h7" stroke="#38b4e4" stroke-width="2"/><circle cx="17" cy="17" r="6" fill="#d84a30"/><path d="M14.500 14.500l5 5M19.500 14.500l-5 5" stroke="#fff" stroke-width="2"/>`],
        ['Preview', `<path d="M7 2h13l3 3v15H7z" fill="#ececec" stroke="#bbb"/><circle cx="14" cy="10" r="6" fill="#dcdcdc" stroke="#999" stroke-width="1.500"/><path d="M9 15l-7 7" stroke="#999" stroke-width="3"/>`],
      ]],
    };
    for (const [id, rows] of Object.entries(icons)) {
      document.getElementById(id).innerHTML = rows.map(row => `
        <div class="flex">${row.map(([name, art]) => `<button class="flex h-[26px] w-[30px] items-center justify-center" aria-label="${name}"><svg class="size-6" viewBox="0 0 24 24">${art}</svg></button>`).join('')}</div>
      `).join('');
    }

    // property grid: [name, value, kind]
    const props = [
      ['Design Data', '', 'head'],
      ['Design Internal Press, kgf/cm²', '6.5'],
      ['Design External Press, kgf/cm²', '0.1'],
      ['Design Internal Temp, C', '120'],
      ['Design External Temp, C', '120'],
      ['Datum Line Options', 'click to edit', 'more'],
      ['Hydrotest Type', 'UG-99b', 'select'],
      ['Hydrotest Position', 'Horizontal', 'select'],
      ['Projection from Top, mm', '0'],
      ['Projection from Bottom, mm', '0'],
      ['Projection from Bottom Ope, mm', '0'],
      ['Min. Des Metal (CET) Temperature, C', '0'],
      ['No UG-20(f) Exemptions', '', 'check'],
      ['Flange Distance to Top, cm', '0'],
      ['Construction Type', 'Welded', 'select'],
      ['Service Type', 'Air/Water/Steam', 'select'],
      ['Degree of Radiography', 'RT-1', 'select'],
      ['Miscellaneous Weight %', 'click for options', 'more'],
      ['Design Code', 'Division 1', 'off'],
      ['User defined MAWP, kgf/cm²', '0'],
      ['User defined MAPnc, kgf/cm²', '0'],
      ['User defined Hydro. Press, kgf/cm²', '0'],
      ['Additional Ope. Static Press, kgf/cm²', '0'],
      ['Use Higher Long. Stress', 'checked', 'check'],
      ['Consider Vortex Shedding', '', 'check'],
      ['No Vortex Shedding for H/D <= 15', '', 'check'],
      ['Is this a heat Exchanger', '', 'check'],
      ['Corroded Hydrotest', '', 'check'],
      ['Hyd. Allowable is 90% Yield', '', 'check'],
      ['EN Allowable Stresses are Hydrotest Allowables', '', 'off'],
      ['ASME Steel Stack', '', 'group'],
      ['Design Modification', '', 'head'],
      ['Select Wall Thickness for Internal Pressure', 'No', 'select'],
      ['Select Wall Thickness for External Pressure', 'No', 'select'],
      ['Select Stiffening Rings for External Pressure', 'No', 'select'],
      ['Select Wall Thickness for Axial Stress', 'No', 'select'],
    ];
    const toggle = plus => `<button class="block pl-0.5" aria-label="Toggle"><svg class="size-[9px]" viewBox="0 0 9 9"><path d="M.5.500h8v8h-8zM2 4.500h5${plus ? 'M4.500 2v5' : ''}" fill="none" stroke="#1e1e1e"/></svg></button>`;
    const field = (id, value, kind) => {
      if (kind === 'select') return `<select id="${id}" class="flex-1 appearance-none outline-none"><option>${value}</option></select><svg class="h-1 w-[7px]" viewBox="0 0 7 4"><path d="M0 0h7L3.500 4z" fill="#707070"/></svg>`;
      if (kind === 'more') return `<input id="${id}" value="${value}" class="min-w-0 flex-1 outline-none"/><button aria-label="More">...</button>`;
      if (kind === 'check') return `<input id="${id}" type="checkbox" ${value} class="peer size-0 appearance-none"/><svg class="ml-px hidden size-2 peer-checked:block" viewBox="0 0 8 8"><path d="M1 4l2 2.500L7 1.500" fill="none" stroke="#000" stroke-width="2"/></svg>`;
      return `<input id="${id}" value="${value}" ${kind === 'off' ? 'disabled' : ''} class="min-w-0 flex-1 outline-none"/>`;
    };
    document.getElementById('props').innerHTML = props.map(([name, value, kind], i) => kind === 'head'
      ? `<tr class="h-[19px] bg-[#d6d6d6]"><td>${toggle(false)}</td><th colspan="2" class="p-0 pl-[3px] text-left font-bold">${name}</th></tr>`
      : `<tr class="h-[19px] ${kind === 'off' ? 'text-[#808080]' : ''}">
          <td class="${kind === 'group' ? 'bg-white' : 'bg-[#d6d6d6]'} p-0">${kind === 'group' ? toggle(true) : ''}</td>
          <td class="overflow-hidden border-r border-b border-[#d6d6d6] p-0 pl-[3px] whitespace-nowrap"><label for="p${i}">${name.replace('<', '&lt;')}</label></td>
          <td class="border-b border-[#d6d6d6] p-0"><div class="flex h-[18px] items-center pr-1 pl-[3px]">${field('p' + i, value, kind)}</div></td>
        </tr>`).join('');

    // weld seams along the shell
    document.getElementById('seams').innerHTML = [[976, 471], [1056, 508], [1159, 554], [1261, 600], [1363, 646], [1465, 693], [1567, 739]]
      .map(([x, y]) => `<ellipse cx="${x}" cy="${y}" rx="63" ry="123" transform="rotate(24.500 ${x} ${y})"/>`).join('');

    // level leaders: top, knee, end of the liquid line, end of the hidden part
    document.getElementById('leaders').innerHTML = [
      [979, 240, 977, 368, 862, 443, 974, 470], [1021, 268, 1018, 388, 905, 462, 1016, 490],
      [1113, 310, 1109, 430, 995, 505, 1107, 531], [1213, 355, 1211, 475, 1097, 550, 1209, 577],
      [1316, 402, 1313, 522, 1198, 597, 1311, 624], [1416, 448, 1415, 568, 1299, 643, 1413, 670],
      [1518, 494, 1515, 614, 1401, 689, 1513, 716], [1619, 541, 1617, 661, 1503, 735, 1615, 762],
      [1672, 564, 1669, 684, 1555, 759, 1667, 785],
    ].map(([a, b, c, d, e, f, g, h]) => `<path d="M${a} ${b}L${c} ${d}L${e} ${f}"/><path d="M${c} ${d}L${g} ${h}" opacity=".45"/>`).join('');

    document.getElementById('dims').innerHTML = [
      [977, 243, 974, 365], [1061, 290, 1059, 403], [1264, 383, 1262, 496], [1467, 475, 1465, 587], [1670, 568, 1668, 684],
      [973, 577, 971, 688], [1156, 660, 1154, 770], [1359, 752, 1357, 864], [1562, 845, 1560, 957], [1667, 893, 1666, 983],
    ].map(([a, b, c, d]) => `<path d="M${a} ${b}L${c} ${d}"/>`).join('');

    const blue = '#1010e0', red = '#dc1e24', cyan = '#35ecec';
    document.getElementById('labels').innerHTML = [
      [929, 249, 'LHS Dish end', blue], [1000, 268, 'Shell 1', blue], [1091, 310, 'Shell 2', blue], [1192, 356, 'Shell 3', blue],
      [1293, 402, 'Shell 4', blue], [1395, 448, 'Shell 5', blue], [1496, 494, 'Shell 6', blue], [1598, 541, 'Shell 7', blue], [1638, 564, 'RHS Dish', blue],
      [821, 392, 'Nozzle N1', blue], [1287, 471, 'Nozzle N13', blue], [1262, 489, 'Nozzle N3', blue], [1347, 526, 'Nozzle N4', blue],
      [1544, 581, 'Nozzle N8', blue], [1471, 628, 'Nozzle N9', '#96284c'],
      [1004, 287, '125.00 cm&nbsp; [30]', red], [1206, 379, '425.00 cm&nbsp; [50]', red], [1409, 471, '725.00 cm&nbsp; [70]', red],
      [923, 703, '5.00 cm&nbsp; [20]', red], [1093, 786, '275.00 cm&nbsp; [40]', red], [1297, 879, '575.00 cm&nbsp; [60]', red], [1500, 971, '875.00 cm&nbsp; [80]', red],
      [802, 586, 'Datum Line', red],
      [823, 474, 'Liquid&nbsp; 10', cyan], [865, 493, 'Liquid 20', cyan], [957, 535, 'Liquid 30', cyan], [1058, 581, 'Liquid 40', cyan], [1159, 627, 'Liquid 50', cyan],
      [1261, 673, 'Liquid 60', cyan], [1362, 719, 'Liquid 70', cyan], [1464, 766, 'Liquid 80', cyan], [1516, 789, 'Liquid 90', cyan],
    ].map(([x, y, t, c]) => `<text x="${x}" y="${y}" fill="${c}">${t}</text>`).join('');

    // view toolbar
    const cube = shade => `<path d="${shade}" fill="#8794a2"/><path d="M2 5h9v9H2zM5 2h9v9h-9zM2 5l3-3M11 5l3-3M2 14l3-3M11 14l3-3" fill="none" stroke="#34404c"/>`;
    const iso = shade => `<path d="${shade}" fill="#55626f"/><path d="M8 1l6.500 6.500L8 15 1.500 7.500zM1.500 7.500L8 10l6.500-2.500M8 10v5M8 1v3" fill="none" stroke="#34404c"/>`;
    const lens = `<circle cx="9" cy="5" r="3.500" fill="#fff" stroke="#444"/><path d="M11 8l4 4" stroke="#444" stroke-width="2.500"/>`;
    const view = [
      cube('M2 5h9v9H2z'), cube('M5 2h9v9H5z'), cube('M2 5l3-3h9l-3 3z'), cube('M2 14l3-3h9l-3 3z'), cube('M2 5l3-3v9l-3 3z'), cube('M11 5l3-3v9l-3 3z'),
      iso('M1.500 7.500L8 10v5z'), iso('M8 10l6.500-2.500L8 15z'), iso('M8 1l6.500 6.500L8 10z'), iso('M8 1L1.500 7.500L8 10z'),
      lens + '<path d="M0 11h8M4 7v8" stroke="#777" stroke-width="1.500"/>', lens + '<path d="M1 10.500h5v4H1z" fill="none" stroke="#555"/>',
      null,
      '<g fill="none" stroke="#2f4760" stroke-width="2.500"><path d="M6 3Q1 5 3 11M10 13q5-2 3-8"/></g><path d="M5 0l5 3-4 4zM11 16l-5-3 4-4z" fill="#2f4760"/>',
      '<path d="M8 0v16" stroke="#2fae3c" stroke-width="4"/><path d="M13 4q4 6-6 7M5 5Q1 6 2 9" fill="none" stroke="#2a7ab8" stroke-width="2.500"/><path d="M8 7v8l-6-4z" fill="#2a7ab8"/>',
      '<path d="M0 4l2-2 8 6 3 2-3 5H7L4 11z" fill="#d09a8c" stroke="#9a6a60" stroke-width=".8"/><path d="M2 2l7 7M0 6l7 6" stroke="#9a6a60"/><path d="M9 11l3-2 4 3v4h-6z" fill="#3a5f96"/><path d="M12 0v7M8.500 3.500h7" stroke="#34588a" stroke-width="1.500"/>',
      '<path d="M0 4h7M7 11h9M11.500 6v10" stroke="#34485c" stroke-width="2.500"/>',
      null,
      '<path d="M.5.500h13v10H.5z" fill="none" stroke="#666" stroke-dasharray="1 1"/><path d="M5 2l9 8-4 0 2 5-2 1-2-5-3 3z" fill="#34485c"/>',
      '<path d="M4 1l9 8-4 0 2 5-2 1-2-5-3 3z" fill="#34485c"/>',
      '<path d="M1 0v14" stroke="#c81e1e" stroke-width="1.500"/><path d="M1 14h15" stroke="#1ea02a" stroke-width="1.500"/><path d="M1 14L15 1" stroke="#2040d0"/><path d="M3 2h3l1 2h3l1-2h3v10h-3l-1-2H7l-1 2H3z" fill="#111"/><path d="M7 5h3v4H7z" fill="#4f9aa0"/>',
      null,
      '<path d="M1 7l6-3 7 1v6l-6 4-7-2zM1 7l7 2 6-4M8 9v6" fill="none" stroke="#333"/><path d="M3 13L12 1v5L6 14z" fill="none" stroke="#d01818" stroke-width="2"/>',
      '<path d="M2.500 4v9q5.500 3 11 0V4" fill="#fff" stroke="#999"/><ellipse cx="8" cy="4" rx="5.500" ry="2.500" fill="#fff" stroke="#999"/><circle cx="7" cy="9.500" r="1.500" fill="none" stroke="#777"/>',
      '<path d="M2 1v14M5 1v14" stroke="#34485c" stroke-width="1.500"/><path d="M5 4h9v8H5z" fill="#fff" stroke="#34485c" stroke-width="1.800"/><path d="M0 8h12" stroke="#c82020"/>',
      '<path d="M13 3Q3 1 3 7t9 5" fill="none" stroke="#111" stroke-width="2"/><path d="M10 9l5 3-5 4z" fill="#111"/>',
    ];
    const active = [13, 23];
    document.getElementById('viewbar').innerHTML =
      '<svg class="mb-1 h-[3px] w-4 shrink-0" viewBox="0 0 16 3"><path d="M0 1.500h16" stroke="#999" stroke-width="3" stroke-dasharray="1 1"/></svg>' +
      view.map((art, i) => art
        ? `<button class="flex h-[22px] w-[22px] shrink-0 items-center justify-center border ${active.includes(i) ? 'border-[#3a8fdc] bg-[#fafafc]' : 'border-transparent'}" aria-label="View tool"><svg class="size-4" viewBox="0 0 16 16">${art}</svg></button>`
        : '<span class="my-[2px] h-px w-[22px] shrink-0 bg-[#c4c4c8]"></span>').join('') +
      '<button class="ml-3" aria-label="More"><svg class="h-2 w-1" viewBox="0 0 4 8"><path d="M0 0l4 4-4 4z" fill="#111"/></svg></button>';
  </script>
</body>
</html>
